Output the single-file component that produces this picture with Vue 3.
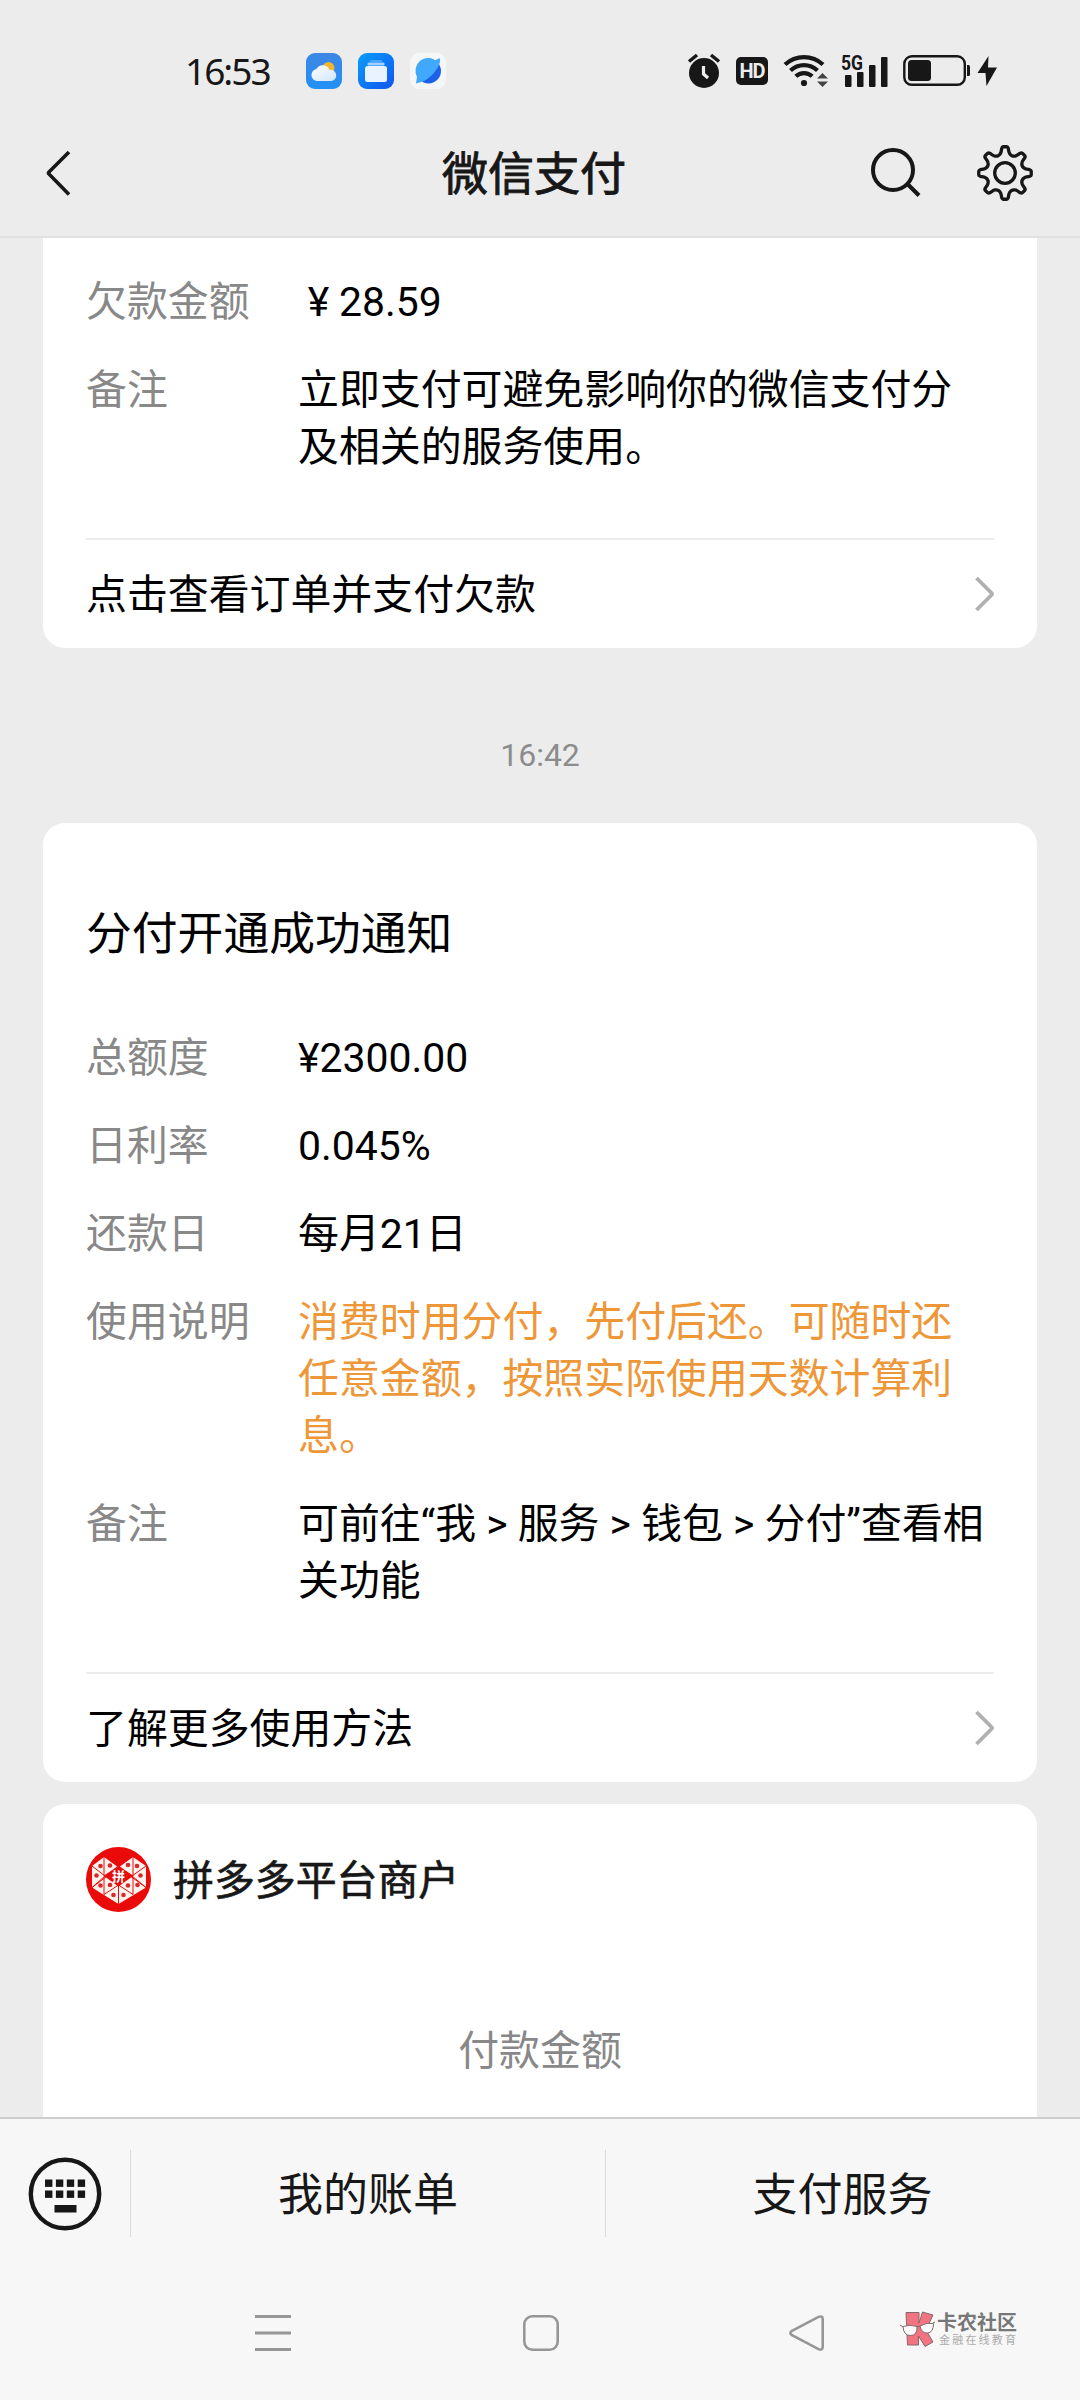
<script setup>
const debtRows = [
  { label: '欠款金额', yen: true, lines: ['28.59'] },
  { label: '备注', lines: ['立即支付可避免影响你的微信支付分', '及相关的服务使用。'] }
]

const creditRows = [
  { label: '总额度', lines: ['¥2300.00'] },
  { label: '日利率', lines: ['0.045%'] },
  { label: '还款日', lines: ['每月21日'] },
  { label: '使用说明', accent: true, lines: ['消费时用分付，先付后还。可随时还', '任意金额，按照实际使用天数计算利', '息。'] },
  { label: '备注', lines: ['可前往“我 > 服务 > 钱包 > 分付”查看相', '关功能'] }
]

// Eight-toothed gear outline around (29, 29)
const polar = (r, deg) => {
  const a = (deg * Math.PI) / 180
  return `${(29 + r * Math.sin(a)).toFixed(2)} ${(29 - r * Math.cos(a)).toFixed(2)}`
}
const gear = Array.from({ length: 8 }, (_, i) => {
  const a = i * 45
  return `${i ? 'L' : 'M'}${polar(19.8, a - 14)} Q${polar(20.6, a - 11.5)} ${polar(22, a - 10)} L${polar(25, a - 7.5)} Q${polar(26.3, a - 6)} ${polar(26.3, a - 4)} L${polar(26.3, a + 4)} Q${polar(26.3, a + 6)} ${polar(25, a + 7.5)} L${polar(22, a + 10)} Q${polar(20.6, a + 11.5)} ${polar(19.8, a + 14)} Q${polar(17.6, a + 22.5)} ${polar(19.8, a + 31)}`
}).join(' ') + 'Z'

const keyCols = [0, 1, 2, 3]
const trinkets = [[14.5, 19], [24, 18.5], [42, 18], [51, 19], [10.5, 28.5], [54.5, 28.5], [14.5, 38.5], [24, 38], [42, 38.5], [51.5, 38], [27.5, 48], [37.5, 48]]
</script>

<template>
  <div class="screen">
    <header class="top">
      <div class="status">
        <span class="clock">16:53</span>
        <svg class="app-weather" width="36" height="36" viewBox="0 0 36 36">
          <defs>
            <linearGradient id="sky" x1="0" y1="0" x2="0" y2="1"><stop offset="0" stop-color="#3f86e3" /><stop offset="1" stop-color="#2191f6" /></linearGradient>
            <linearGradient id="cloud" x1="0" y1="0" x2="1" y2="1"><stop offset="0" stop-color="#fff" /><stop offset="1" stop-color="#cfe5fc" /></linearGradient>
          </defs>
          <rect width="36" height="36" rx="9" fill="url(#sky)" />
          <circle cx="22.5" cy="15" r="6" fill="#f5b52d" />
          <path d="M11 28a6 6 0 0 1-.6-11.9A7.2 7.2 0 0 1 23.500 17a5.600 5.600 0 1 1 .2 11z" fill="url(#cloud)" />
        </svg>
        <svg class="app-files" width="36" height="36" viewBox="0 0 36 36">
          <defs>
            <linearGradient id="folder" x1="0" y1="0" x2="1" y2="1"><stop offset="0" stop-color="#0a9dfb" /><stop offset="1" stop-color="#1055ee" /></linearGradient>
          </defs>
          <rect width="36" height="36" rx="9" fill="url(#folder)" />
          <rect x="12" y="7" width="12" height="2" rx="1" fill="#49a5fa" />
          <rect x="9.500" y="9.500" width="17" height="3" rx="1.200" fill="#9fd0fd" />
          <rect x="7" y="13" width="22" height="16" rx="2.500" fill="#e8f3ff" />
        </svg>
        <svg class="app-browser" width="36" height="36" viewBox="0 0 36 36">
          <rect width="36" height="36" rx="9" fill="#f5f6f7" />
          <circle cx="18.500" cy="18" r="12.500" fill="#1c62e8" />
          <path d="M6 30.500L7 23.500A12.500 12.500 0 0 1 25 7.200L29.500 5.200q1.500 1.300-.5 6.800C26 19 18.500 26.500 12 28.800z" fill="#40a9fb" />
        </svg>

        <svg class="alarm" width="34" height="36" viewBox="0 0 34 36" fill="none" stroke="#171717">
          <circle cx="17" cy="20" r="15" fill="#171717" stroke="none" />
          <path d="M2 8.500L10 2M32 8.500L24 2" stroke-width="3.500" />
          <path d="M16.500 13v8l4.500 4" stroke="#ececec" stroke-width="3.200" />
        </svg>
        <span class="hd">HD</span>
        <svg class="wifi" width="46" height="36" viewBox="0 0 46 36" fill="none" stroke="#171717" stroke-width="4.200">
          <path d="M2 11.500A28 28 0 0 1 40 11.500" />
          <path d="M7.500 17.500A19.500 19.500 0 0 1 34.500 17.500" />
          <path d="M12.800 23.300A12 12 0 0 1 29.200 23.300" />
          <circle cx="21" cy="30" r="3.100" fill="#171717" stroke="none" />
          <path d="M34 25.500l5.500-5.500 5.500 5.500zM34 28.500l5.500 5.500 5.500-5.500z" fill="#444" stroke="none" />
        </svg>
        <svg class="signal" width="48" height="44" viewBox="0 -6 48 44" fill="#171717">
          <rect x="4" y="20" width="6.500" height="12" rx="1" />
          <rect x="16" y="17" width="6.500" height="15" rx="1" />
          <rect x="28" y="10" width="6.500" height="22" rx="1" />
          <rect x="40" y="2" width="6.500" height="30" rx="1" />
          <text x="0" y="14.500" font-size="20" textLength="22" lengthAdjust="spacingAndGlyphs" font-family="Roboto, sans-serif" font-weight="700">5G</text>
        </svg>
        <svg class="battery" width="68" height="32" viewBox="0 0 68 32">
          <rect x="1.300" y="1.300" width="60.500" height="28.500" rx="7.500" fill="none" stroke="#171717" stroke-width="2.400" />
          <rect x="5" y="5" width="23" height="21" rx="3.500" fill="#171717" />
          <path d="M64 10h1.500q1.500 0 1.500 1.500v8q0 1.500-1.500 1.500h-1.500z" fill="#171717" />
        </svg>
        <svg class="bolt" width="20" height="32" viewBox="0 0 20 32"><path d="M11.500 1L.5 18h8L9.500 31 20 12.500h-9z" fill="#171717" /></svg>
      </div>

      <div class="bar">
        <svg class="back" width="28" height="50" viewBox="0 0 28 50" fill="none" stroke="#171717" stroke-width="3.600" stroke-linejoin="round"><path d="M25 4L5 24q-1 1 0 2L25 46.500" /></svg>
        <h1>微信支付</h1>
        <svg class="search" width="54" height="54" viewBox="0 0 54 54" fill="none" stroke="#171717" stroke-width="4"><circle cx="24" cy="24" r="20" /><path d="M38.500 38L50 49.500" /></svg>
        <svg class="gear" width="58" height="58" viewBox="0 0 58 58" fill="none" stroke="#171717" stroke-width="3.300" stroke-linejoin="round"><path :d="gear" /><circle cx="29" cy="29" r="10.300" /></svg>
      </div>
    </header>

    <main>
      <section class="card first">
        <dl>
          <div v-for="row in debtRows" :key="row.label" class="row">
            <dt>{{ row.label }}</dt>
            <dd><p v-for="line in row.lines" :key="line"><span v-if="row.yen" class="yen">¥</span>{{ line }}</p></dd>
          </div>
        </dl>
        <div class="more">
          <span>点击查看订单并支付欠款</span>
          <svg width="22" height="38" viewBox="0 0 22 38" fill="none" stroke="#b0b0b0" stroke-width="3.800" stroke-linejoin="round"><path d="M4.500 3L19.500 18q1 1 0 2L4.500 35" /></svg>
        </div>
      </section>

      <time>16:42</time>

      <section class="card">
        <h2>分付开通成功通知</h2>
        <dl>
          <div v-for="row in creditRows" :key="row.label" class="row">
            <dt>{{ row.label }}</dt>
            <dd :class="{ accent: row.accent }"><p v-for="line in row.lines" :key="line">{{ line }}</p></dd>
          </div>
        </dl>
        <div class="more">
          <span>了解更多使用方法</span>
          <svg width="22" height="38" viewBox="0 0 22 38" fill="none" stroke="#b0b0b0" stroke-width="3.800" stroke-linejoin="round"><path d="M4.500 3L19.500 18q1 1 0 2L4.500 35" /></svg>
        </div>
      </section>

      <section class="card merchant">
        <div class="shop">
          <svg width="65" height="65" viewBox="0 0 65 65">
            <circle cx="32.500" cy="32.500" r="32.500" fill="#ea0a0a" />
            <path d="M6 19L18 10 32.500 20.500 47 10 60 19V40.500L32.500 57 6 40.500z" fill="#fff3ee" />
            <path d="M18 10v19M47 10v19M6 19l13 10L6 40.500M60 19L46 29l14 11.500M18 47.500V30M47 47.500V30M6 40.500L32.500 20.500 60 40.500M18 47.500l14.500-9.500L47 47.500M32.500 38v19M18 29L32.500 20M47 29L32.500 20" fill="none" stroke="#ea0a0a" stroke-width="1" />
            <path d="M32.500 18.500L47 29 32.500 39.500 18 29z" fill="#ea0a0a" />
            <circle v-for="(t, i) in trinkets" :key="i" :cx="t[0]" :cy="t[1]" r="2.300" fill="#d9272b" />
            <text x="32.500" y="34" text-anchor="middle" font-size="13" font-weight="700" fill="#fff" font-family="'Noto Sans CJK SC', sans-serif">拼</text>
          </svg>
          <span>拼多多平台商户</span>
        </div>
        <p class="amount">付款金额</p>
      </section>
    </main>

    <footer>
      <div class="menu">
        <div class="keyboard">
          <svg width="74" height="76" viewBox="0 0 74 76">
            <ellipse cx="37" cy="38" rx="34.200" ry="34.200" fill="none" stroke="#171717" stroke-width="4.400" />
            <g fill="#171717">
              <rect v-for="c in keyCols" :key="'a' + c" :x="17 + c * 10.900" y="23.500" width="7.400" height="7.400" />
              <rect v-for="c in keyCols" :key="'b' + c" :x="17 + c * 10.900" y="34.500" width="7.400" height="7.400" />
              <rect x="26.500" y="49" width="22" height="7.500" />
            </g>
          </svg>
        </div>
        <div class="entry">我的账单</div>
        <div class="entry">支付服务</div>
      </div>
      <div class="nav">
        <svg class="recent" width="36" height="36" viewBox="0 0 36 36" stroke="#969696" stroke-width="3"><path d="M0 1.500h36M0 18h36M0 34.500h36" /></svg>
        <svg class="home" width="36" height="36" viewBox="0 0 36 36" fill="none" stroke="#969696" stroke-width="2.600"><rect x="1.300" y="1.300" width="33.400" height="33.400" rx="8" /></svg>
        <svg class="prev" width="36" height="36" viewBox="0 0 36 36" fill="none" stroke="#969696" stroke-width="2.600"><path d="M3 15.800L29.500 1.900q4.200-1.500 4.200 2v28.200q0 3.500-4.200 2L3 20.200q-3.200-2.200 0-4.400z" /></svg>
        <div class="mark">
          <svg width="36" height="36" viewBox="0 0 36 36" stroke="#84696c" stroke-width="1">
            <path d="M6 1.500h13V12L22.500 1 33 4 26 19l7 12-8 4.500-6.500-10.500V34H7.500z" fill="#f27480" />
            <path d="M3 15.500q7-2.500 14 0 .5 9-6.500 9T3 15.500zM20 15q7-4 13.500-2.500 0 9-6 9.500T20 15z" fill="#fafafa" />
            <path d="M0 14l3 2M17 16l3-1M33 12l2-1" fill="none" />
          </svg>
          <div class="mark-text"><b>卡农社区</b><small>金融在线教育</small></div>
        </div>
      </div>
    </footer>
  </div>
</template>

<style>
html, body { margin: 0; background: #ececec; }
</style>

<style scoped>
.screen { width: 1080px; height: 2400px; overflow: hidden; display: flex; flex-direction: column; background: #ececec; color: #000; font-family: Roboto, "Noto Sans CJK SC", sans-serif; font-size: 40.900px; line-height: 57px; }
svg { display: block; flex: none; }
h1, h2, p, dl, dd { margin: 0; font-weight: 400; }

.top { height: 236px; flex: none; border-bottom: 2px solid #e0e0e0; }
.status { display: flex; align-items: center; height: 106px; padding: 36px 0 0 185px; box-sizing: border-box; color: #171717; }
.clock { width: 121px; font: 400 37px/44px "Noto Sans", sans-serif; letter-spacing: -2px; white-space: nowrap; }
.app-files { margin-left: 16px; }
.app-browser { margin-left: 16px; }
.alarm { margin-left: 241px; }
.hd { width: 32px; height: 28px; margin-left: 15px; border-radius: 5px; background: #171717; color: #ececec; font: 700 20px/29px Roboto, sans-serif; text-align: center; letter-spacing: -1px; }
.wifi { margin-left: 15px; }
.signal { margin-left: 12px; }
.battery { margin-left: 14px; }
.bolt { margin-left: 6px; }

.bar { display: flex; align-items: center; height: 130px; padding: 3px 46px 0 44px; box-sizing: border-box; color: #171717; }
.back { width: 28px; margin-right: 362px; }
h1 { width: 200px; padding-top: 3px; text-align: center; font-size: 46px; line-height: 60px; -webkit-text-stroke: 0.9px #171717; white-space: nowrap; }
.search { margin-left: 235px; }
.gear { margin-left: 53px; }

main { flex: 1; min-height: 0; overflow: hidden; }
.card { margin: 0 43px; padding: 0 43px; border-radius: 22px; background: #fff; }
.card.first { padding-top: 36px; border-radius: 0 0 22px 22px; }
.row { display: flex; margin-bottom: 31px; }
.row:last-child { margin-bottom: 0; }
dt { width: 212px; flex: none; color: #888; }
dd { white-space: nowrap; }
.accent { color: #ee9738; }
.yen { display: inline-block; width: 41px; text-align: center; }
.more { display: flex; align-items: center; justify-content: space-between; height: 110px; margin-top: 62px; padding-top: 3px; border-top: 2px solid #ebebeb; box-sizing: border-box; }
.more svg { margin: -3px 0 0; }
time { display: block; height: 175px; font-size: 32px; line-height: 214px; text-align: center; color: #8c8c8c; }
h2 { padding: 82px 0 65px; font-size: 45.800px; line-height: 60px; }
.merchant { height: 400px; margin-top: 22px; padding-top: 43px; }
.shop { display: flex; align-items: center; gap: 22px; color: #171717; -webkit-text-stroke: 0.7px #171717; }
.shop span { padding-top: 4px; }
.shop svg { -webkit-text-stroke: 0; }
.amount { margin-top: 111px; text-align: center; color: #888; }

footer { height: 283px; flex: none; border-top: 2px solid #cdcdcd; box-sizing: border-box; background: #f7f7f7; }
.menu { display: flex; align-items: center; height: 149px; }
.keyboard { width: 130px; display: flex; justify-content: center; }
.entry { flex: 1; height: 87px; border-left: 1px solid #dadada; font-size: 45px; line-height: 92px; text-align: center; color: #171717; }
.entry:last-child { text-indent: -1px; }
.nav { display: flex; align-items: center; height: 130px; padding: 0 0 1px 255px; box-sizing: border-box; }
.home { margin-left: 232px; }
.prev { margin-left: 230px; }
.mark { display: flex; align-items: center; margin: -7px 0 0 75px; gap: 1px; }
.mark-text { display: flex; flex-direction: column; color: #777; font-family: "Noto Sans CJK SC", sans-serif; white-space: nowrap; }
.mark-text b { font-size: 20px; line-height: 20px; }
.mark-text small { margin: 0 0 0 2px; font-size: 11px; line-height: 14px; letter-spacing: 2.200px; color: #aaa; }
</style>
